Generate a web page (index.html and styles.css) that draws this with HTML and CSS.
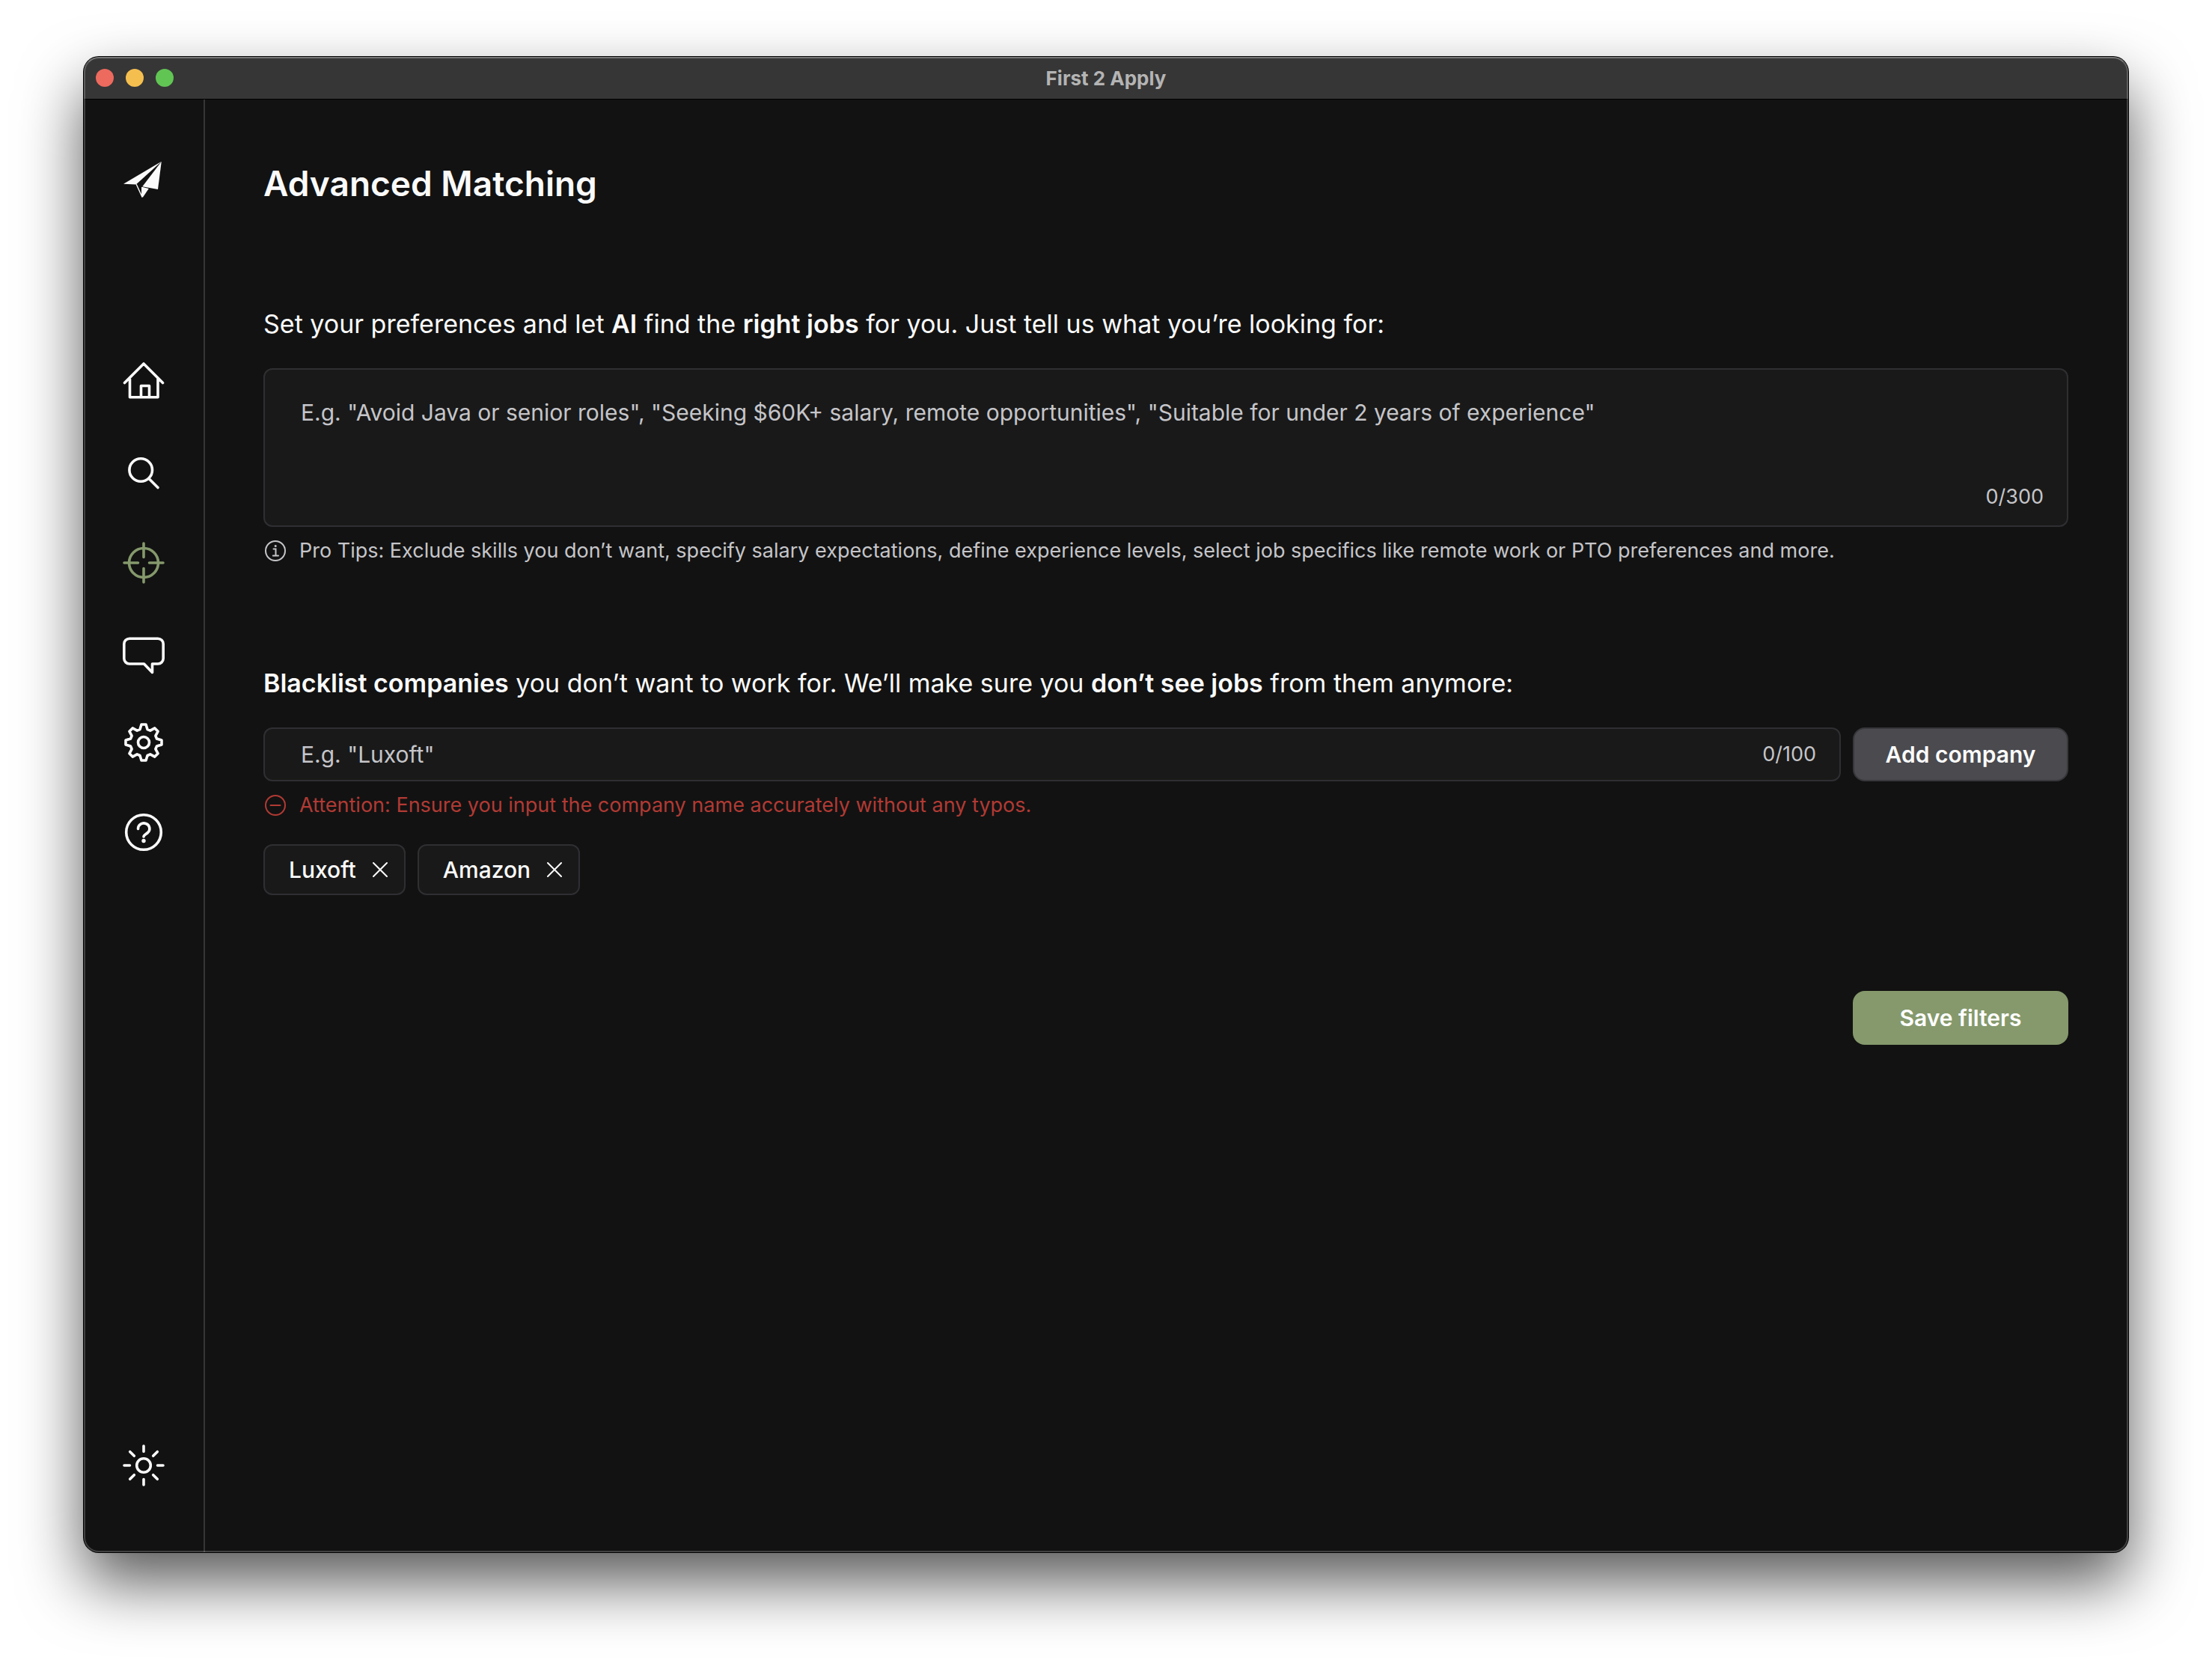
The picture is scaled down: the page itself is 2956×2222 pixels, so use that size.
FILE: index.html
```html
<!DOCTYPE html>
<html lang="en">
<head>
<meta charset="utf-8">
<meta name="viewport" content="width=device-width, initial-scale=1">
<title>First 2 Apply</title>
<link rel="stylesheet" href="styles.css">
</head>
<body>
<div class="window">
  <header class="titlebar">
    <div class="lights">
      <button class="light light-close" aria-label="Close"></button>
      <button class="light light-minimize" aria-label="Minimize"></button>
      <button class="light light-zoom" aria-label="Zoom"></button>
    </div>
    <span class="window-title">First 2 Apply</span>
  </header>

  <div class="app">
    <nav class="sidebar" aria-label="Main">
      <a class="nav-link logo" href="#" aria-label="First 2 Apply">
        <svg class="icon" viewBox="0 0 60 60" fill="currentColor">
          <path d="M3 35.7 53.8 5.800 19.800 36.400z"/>
          <path d="M53.800 5.800 49 43 28.300 39.200z"/>
          <path d="M27.600 39.800 36.800 42 29 53.500H27z"/>
          <path d="M20.200 36.200 27.900 53 27.800 40" fill="none" stroke="currentColor" stroke-width="1.400"/>
        </svg>
      </a>
      <div class="nav-group">
        <a class="nav-link" href="#" aria-label="Home">
          <svg class="icon line" viewBox="0 0 60 60">
            <path d="M4.500 29.500 30 4 55.500 29.500M11.500 24.500V48.700H49V24.500M26.500 48V33.500H37.500V48"/>
          </svg>
        </a>
        <a class="nav-link" href="#" aria-label="Search">
          <svg class="icon line" viewBox="0 0 60 60">
            <circle cx="26.200" cy="26" r="15.300"/><path d="M37 37.500 49 49.500"/>
          </svg>
        </a>
        <a class="nav-link active" href="#" aria-label="Advanced matching" aria-current="page">
          <svg class="icon line" viewBox="0 0 60 60">
            <circle cx="30" cy="30" r="19.500"/><path d="M30 4V22.500M30 37.500V56M4 30H22.500M37.500 30H56"/>
          </svg>
        </a>
        <a class="nav-link" href="#" aria-label="Feedback">
          <svg class="icon line" viewBox="0 0 60 60">
            <path d="M11 11.200H49A7.200 7.200 0 0 1 56.200 18.400V37.800A7.200 7.200 0 0 1 49 45H41.500V56.500L30.500 45H11A7.200 7.200 0 0 1 3.800 37.800V18.400A7.200 7.200 0 0 1 11 11.200Z"/>
          </svg>
        </a>
        <a class="nav-link" href="#" aria-label="Settings">
          <svg class="icon line" viewBox="0 0 60 60">
            <path transform="translate(30 30)" d="M-5-17.500-3-24H3L5-17.500 8.800-15.900 14.800-19.100 19.100-14.800 15.900-8.800 17.500-5 24-3V3L17.500 5 15.900 8.800 19.100 14.800 14.800 19.100 8.800 15.900 5 17.500 3 24H-3L-5 17.500-8.800 15.900-14.800 19.100-19.100 14.800-15.900 8.800-17.500 5-24 3V-3L-17.500-5-15.900-8.800-19.100-14.800-14.800-19.100-8.800-15.900Z"/>
            <circle cx="30" cy="30" r="7.500"/>
          </svg>
        </a>
        <a class="nav-link" href="#" aria-label="Help">
          <svg class="icon line" viewBox="0 0 60 60">
            <circle cx="30" cy="30" r="23.300"/>
            <path d="M22.500 25.500A7.700 7.300 0 1 1 35.500 30.500C32.500 33 30 33.500 30 36"/>
            <circle cx="30" cy="41.500" r="2.700" fill="currentColor" stroke="none"/>
          </svg>
        </a>
      </div>
      <button class="nav-link theme" aria-label="Toggle theme">
        <svg class="icon line" viewBox="0 0 60 60">
          <circle cx="30" cy="30" r="9.300"/>
          <path d="M30 4V11.500M30 48.500V56M4 30H11.500M48.500 30H56M11.700 11.700 17.300 17.300M42.700 42.700 48.300 48.300M11.700 48.300 17.300 42.700M42.700 17.300 48.300 11.700"/>
        </svg>
      </button>
    </nav>

    <main class="content">
      <h1>Advanced Matching</h1>

      <section class="block">
        <label class="prompt" for="preferences">Set your preferences and let <b>AI</b> find the <b>right jobs</b> for you. Just tell us what you’re looking for:</label>
        <div class="field field-tall">
          <textarea id="preferences" maxlength="300" placeholder="E.g. &quot;Avoid Java or senior roles&quot;, &quot;Seeking $60K+ salary, remote opportunities&quot;, &quot;Suitable for under 2 years of experience&quot;"></textarea>
          <span class="counter">0/300</span>
        </div>
        <p class="hint">
          <svg class="hint-icon" viewBox="0 0 28 28">
            <circle cx="14" cy="14" r="13"/><path d="M11.500 11.500H14.500V20.500M10.800 20.500H18"/><circle cx="14.200" cy="7.600" r="1.500" fill="currentColor" stroke="none"/>
          </svg>
          Pro Tips: Exclude skills you don’t want, specify salary expectations, define experience levels, select job specifics like remote work or PTO preferences and more.
        </p>
      </section>

      <section class="block">
        <label class="prompt" for="company"><b>Blacklist companies</b> you don’t want to work for. We’ll make sure you <b>don’t see jobs</b> from them anymore:</label>
        <div class="row">
          <div class="field">
            <input id="company" type="text" maxlength="100" placeholder="E.g. &quot;Luxoft&quot;">
            <span class="counter">0/100</span>
          </div>
          <button class="button button-add">Add company</button>
        </div>
        <p class="hint hint-warning">
          <svg class="hint-icon" viewBox="0 0 28 28">
            <circle cx="14" cy="14" r="13"/><path d="M7.500 14H20.500"/>
          </svg>
          Attention: Ensure you input the company name accurately without any typos.
        </p>
        <ul class="chips">
          <li class="chip">Luxoft
            <button class="chip-remove" aria-label="Remove Luxoft"><svg viewBox="0 0 20 20"><path d="M1 1 19 19M19 1 1 19"/></svg></button>
          </li>
          <li class="chip">Amazon
            <button class="chip-remove" aria-label="Remove Amazon"><svg viewBox="0 0 20 20"><path d="M1 1 19 19M19 1 1 19"/></svg></button>
          </li>
        </ul>
      </section>

      <div class="actions">
        <button class="button button-save">Save filters</button>
      </div>
    </main>
  </div>
</div>
</body>
</html>
```
FILE: styles.css
```css
*,
*::before,
*::after {
  box-sizing: border-box;
}

body {
  display: flex;
  min-height: 100vh;
  margin: 0;
  padding: 76px 112px 148px;
  background: #fff;
  color: #fafafa;
  font-family: Inter, "Liberation Sans", sans-serif;
  font-size: 30px;
}

button,
input,
textarea {
  margin: 0;
  padding: 0;
  border: 0;
  background: none;
  color: inherit;
  font: inherit;
}

button {
  cursor: pointer;
}

h1,
p,
ul {
  margin: 0;
  padding: 0;
}

.window {
  position: relative;
  display: flex;
  flex: 1;
  flex-direction: column;
  min-width: 0;
  border-radius: 20px;
  background: #121212;
  box-shadow: 0 0 0 1px #000, 0 40px 84px rgba(0, 0, 0, 0.66);
}

/* light rim drawn over the window's edge */
.window::after {
  content: "";
  position: absolute;
  inset: 0;
  border: 2px solid rgba(255, 255, 255, 0.2);
  border-top-color: rgba(255, 255, 255, 0.32);
  border-radius: 20px;
  pointer-events: none;
}

.titlebar {
  display: grid;
  grid-template-columns: 1fr auto 1fr;
  align-items: center;
  height: 57px;
  padding: 0 16px;
  border-bottom: 1px solid #000;
  border-radius: 20px 20px 0 0;
  background: #363636;
}

.lights {
  display: flex;
  gap: 16px;
}

.light {
  width: 24px;
  height: 24px;
  border-radius: 50%;
}

.light-close {
  background: #ed6a5e;
}

.light-minimize {
  background: #f5bf4f;
}

.light-zoom {
  background: #61c554;
}

.window-title {
  color: #b4b4b4;
  font-size: 26px;
  font-weight: 700;
}

.app {
  display: flex;
  flex: 1;
}

.sidebar {
  display: flex;
  flex: none;
  flex-direction: column;
  align-items: center;
  width: 162px;
  padding: 77px 0 86px;
  border-right: 2px solid #363636;
}

.nav-link {
  display: block;
  width: 60px;
  height: 60px;
  color: #fafafa;
}

.nav-link.active {
  color: #85996c;
}

.nav-group {
  display: flex;
  flex-direction: column;
  gap: 60px;
  margin-top: 212px;
}

.theme {
  margin-top: auto;
}

.icon {
  display: block;
  width: 60px;
  height: 60px;
}

.line {
  fill: none;
  stroke: currentColor;
  stroke-width: 3.6;
  stroke-linecap: round;
  stroke-linejoin: round;
}

.content {
  flex: 1;
  min-width: 0;
  padding: 80px 80px 80px 78px;
}

h1 {
  margin-bottom: 132px;
  font-size: 46px;
  font-weight: 600;
  line-height: 64px;
}

.block + .block {
  margin-top: 137px;
}

.prompt {
  display: block;
  margin-bottom: 35px;
  font-size: 34px;
  line-height: 48px;
}

.prompt b {
  font-weight: 600;
}

.field {
  display: flex;
  flex: 1;
  align-items: center;
  height: 72px;
  padding: 0 31px 0 48px;
  border: 2px solid #2f2f33;
  border-radius: 12px;
  background: #191919;
}

.field-tall {
  align-items: flex-end;
  height: 212px;
  padding-bottom: 22px;
}

.field input,
.field textarea {
  flex: 1;
  min-width: 0;
  outline: 0;
}

.field input {
  height: 100%;
}

.field textarea {
  height: 186px;
  padding-top: 36px;
  line-height: 42px;
  resize: none;
}

.field ::placeholder {
  color: #c5c5c9;
  opacity: 1;
}

.counter {
  color: #c5c5c9;
  font-size: 27px;
  line-height: 32px;
}

.hint {
  display: flex;
  align-items: center;
  gap: 18px;
  margin-top: 16px;
  color: #c5c5c9;
  font-size: 27px;
  line-height: 32px;
}

.hint-warning {
  color: #b13a34;
}

.hint-icon {
  flex: none;
  width: 28px;
  height: 28px;
  margin-left: 2px;
  fill: none;
  stroke: currentColor;
  stroke-width: 2;
  stroke-linecap: round;
}

.row {
  display: flex;
  gap: 16px;
}

.button {
  width: 288px;
  height: 72px;
  border-radius: 16px;
  font-size: 30px;
  font-weight: 600;
}

.button-add {
  border: 2px solid #38383c;
  background: #4a4a4f;
}

.button-save {
  background: #85996c;
  color: #fff;
}

.chips {
  display: flex;
  flex-wrap: wrap;
  gap: 16px;
  margin-top: 36px;
  list-style: none;
}

.chip {
  display: flex;
  align-items: center;
  gap: 22px;
  height: 68px;
  padding: 0 22px 0 32px;
  border: 2px solid #2f2f33;
  border-radius: 12px;
  background: #191919;
  font-weight: 500;
}

.chip-remove,
.chip-remove svg {
  display: block;
  width: 20px;
  height: 20px;
}

.chip-remove svg {
  fill: none;
  stroke: #fafafa;
  stroke-width: 2;
  stroke-linecap: round;
}

.actions {
  display: flex;
  justify-content: flex-end;
  margin-top: 128px;
}
```
